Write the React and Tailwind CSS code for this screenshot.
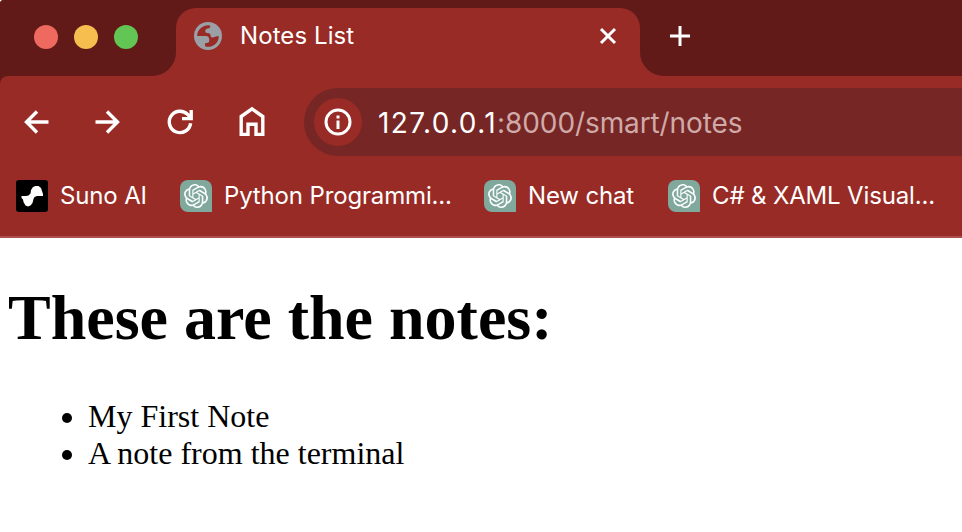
import React from "react";
import { SiOpenai } from "react-icons/si";

function GlobeIcon() {
  return (
    <svg width="28" height="28" viewBox="0 0 28 28" className="block shrink-0">
      <circle cx="14" cy="14" r="14" fill="#9aa0a6" />
      <path
        d="M3.200 14C3.200 8 8 3.300 14 3.200C15.500 3.200 16.300 3.400 16.300 4C16.300 5.600 15.500 6.300 14 6.500C12.300 6.700 11.300 7.500 11.300 9C11.300 10.500 12 11 13.500 11C15.800 11 16.600 12 16.600 13.800C16.600 15 17.200 15.500 18.500 15.500C20.600 15.500 21.200 14.200 22.800 14.200H24.800C24.800 20.200 20.200 24.800 14 24.800C12.200 24.800 11 24.400 11 23.800V22.300C11 21.400 11.500 21 12.500 21C14.600 21 15.300 20.200 15.300 18C15.300 15.500 14.200 14 11.500 14Z"
        fill="#982b25"
      />
    </svg>
  );
}

function SunoIcon() {
  return (
    <svg width="32" height="32" viewBox="0 0 32 32" className="block shrink-0">
      <rect width="32" height="32" rx="3" fill="#000" />
      <path
        d="M12.500 15.500L14.500 13.500L15 10L17 7L19.500 6H22.500L25 8L26 11L27 14V16H21L18.500 17L17.500 19L16.500 23L14.500 25.500L12 26.500L9.500 25.500L7.500 22L7 19.500L5.500 18V16H10Z"
        fill="#fff"
      />
    </svg>
  );
}

function ChatIcon() {
  return (
    <span className="flex size-8 shrink-0 items-center justify-center rounded-[8px] rounded-br-none bg-[#80a89d] text-white">
      <SiOpenai size={24} />
    </span>
  );
}

function Bookmark({ icon, label, className }) {
  return (
    <div className={"flex shrink-0 items-center gap-3 " + className}>
      {icon}
      <span className="whitespace-nowrap">{label}</span>
    </div>
  );
}

function TabStrip() {
  return (
    <div className="flex h-[76px] bg-[#982b25]">
      <div className="flex w-[176px] items-center gap-4 rounded-br-[24px] bg-[#611a18] pb-[2px] pl-[34px]">
        <span className="size-6 rounded-full bg-[#ee6a5f]" />
        <span className="size-6 rounded-full bg-[#f5be4f]" />
        <span className="size-6 rounded-full bg-[#62c554]" />
      </div>
      <div className="w-[464px] bg-[#611a18] pt-2">
        <div className="flex h-[68px] items-start rounded-t-[20px] bg-[#982b25] pl-[18px] pt-[14px] text-white">
          <GlobeIcon />
          <span className="ml-[18px] w-[357px] text-[24px] leading-7 tracking-[0.080px]">Notes List</span>
          <svg width="20" height="28" viewBox="0 0 20 28" className="block" fill="none" stroke="currentColor" strokeWidth="3">
            <path d="M4 7L18 21M18 7L4 21" />
          </svg>
        </div>
      </div>
      <div className="flex flex-1 rounded-bl-[24px] bg-[#611a18] pl-[30px] pt-[26px] text-white">
        <svg width="20" height="20" viewBox="0 0 20 20" fill="none" stroke="currentColor" strokeWidth="3">
          <path d="M10 0V20M0 10H20" />
        </svg>
      </div>
    </div>
  );
}

function NavButtons() {
  return (
    <svg width="304" height="68" viewBox="0 88 304 68" className="block shrink-0" fill="none" stroke="#fff" strokeWidth="3.400">
      <path d="M48.500 122H26.500M37 111.500L26.500 122L37 132.500" />
      <path d="M95.500 122H117.500M107 111.500L117.500 122L107 132.500" />
      <path d="M190.600 123.200A10.700 10.700 0 1 1 187.600 114.400L191 118M191.200 110V118.600H182" />
      <path d="M241.200 134.400V116.500L252 108.900L262.800 116.500V134.400H256V124.300H248V134.400Z" />
    </svg>
  );
}

function Toolbar() {
  return (
    <div className="bg-[#611a18]">
      <div className="flex h-[92px] rounded-tl-[8px] bg-[#982b25] py-3">
        <NavButtons />
        <div className="flex flex-1 items-center rounded-l-full bg-[#762624] pl-[10px]">
          <span className="flex size-12 items-center justify-center rounded-full bg-[#982b25]">
            <svg width="28" height="28" viewBox="0 0 28 28" fill="none" stroke="#fff">
              <circle cx="14" cy="14" r="12" strokeWidth="3" />
              <path d="M14 12.500V21" strokeWidth="3" />
              <path d="M14 7.500V10.500" strokeWidth="3" />
            </svg>
          </span>
          <span className="ml-4 whitespace-nowrap pt-px text-[28px] leading-8 tracking-[-0.100px] text-[#cfaaa9]">
            <span className="tracking-[1.400px] text-white">127.0.0.1</span>:8000/smart/notes
          </span>
        </div>
      </div>
    </div>
  );
}

function BookmarksBar() {
  return (
    <div className="flex h-[70px] items-start border-b-2 border-[#ac4e4b] pl-4 pt-3 text-[24px] leading-8 tracking-[-0.150px] text-white">
      <Bookmark icon={<SunoIcon />} label="Suno AI" className="w-[164px]" />
      <Bookmark icon={<ChatIcon />} label="Python Programmi..." className="w-[304px]" />
      <Bookmark icon={<ChatIcon />} label="New chat" className="w-[184px]" />
      <Bookmark icon={<ChatIcon />} label="C# & XAML Visual..." className="w-[280px]" />
    </div>
  );
}

export default function App() {
  return (
    <div className="h-[532px] w-[962px] overflow-hidden bg-white font-['Inter',sans-serif]">
      <header className="overflow-hidden rounded-tl-[4px] bg-[#982b25]">
        <TabStrip />
        <Toolbar />
        <BookmarksBar />
      </header>
      <main className="px-2 pt-[43px] font-['Liberation_Serif',serif] text-black">
        <h1 className="text-[64px] font-bold leading-[74px]">These are the notes:</h1>
        <ul className="mt-[43px] list-disc pl-20 text-[32px] leading-[37px]">
          <li>My First Note</li>
          <li>A note from the terminal</li>
        </ul>
      </main>
    </div>
  );
}
